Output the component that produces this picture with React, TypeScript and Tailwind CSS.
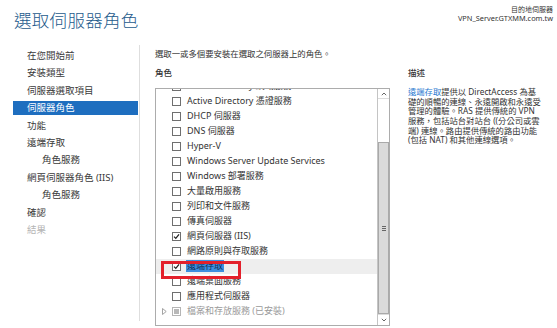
import React from "react";

const FONT = '"Noto Sans", "Noto Sans CJK TC", sans-serif';

type Row = {
  label: string;
  checked?: boolean;
  disabled?: boolean;
  expand?: boolean;
  selected?: boolean;
};

const rows: Row[] = [
  { label: "Active Directory 網域服務" },
  { label: "Active Directory 憑證服務" },
  { label: "DHCP 伺服器" },
  { label: "DNS 伺服器" },
  { label: "Hyper-V" },
  { label: "Windows Server Update Services" },
  { label: "Windows 部署服務" },
  { label: "大量啟用服務" },
  { label: "列印和文件服務" },
  { label: "傳真伺服器" },
  { label: "網頁伺服器 (IIS)", checked: true },
  { label: "網路原則與存取服務" },
  { label: "遠端存取", checked: true, selected: true },
  { label: "遠端桌面服務" },
  { label: "應用程式伺服器" },
  { label: "檔案和存放服務 (已安裝)", disabled: true, expand: true },
];

const nav = [
  { label: "在您開始前" },
  { label: "安裝類型" },
  { label: "伺服器選取項目" },
  { label: "伺服器角色", active: true },
  { label: "功能" },
  { label: "遠端存取" },
  { label: "角色服務", indent: true },
  { label: "網頁伺服器角色 (IIS)" },
  { label: "角色服務", indent: true },
  { label: "確認" },
  { label: "結果", dim: true },
];

function Checkbox({ checked, disabled }: { checked?: boolean; disabled?: boolean }) {
  return (
    <div
      className={
        "w-[9px] h-[9px] shrink-0 border flex items-center justify-center bg-white " +
        (disabled ? "border-[#b5b5b5]" : "border-[#6f6f6f]")
      }
    >
      {checked && (
        <svg width="7" height="7" viewBox="0 0 7 7">
          <path d="M1 3.6 L2.8 5.4 L6 1.4" fill="none" stroke="#222" strokeWidth="1.3" />
        </svg>
      )}
      {disabled && <div className="w-[5px] h-[5px] bg-[#b8b8b8]" />}
    </div>
  );
}

export default function App() {
  return (
    <div
      className="relative w-[557px] h-[328px] bg-white overflow-hidden text-[#333]"
      style={{ fontFamily: FONT }}
    >
      {/* header */}
      <div className="flex justify-between h-[45px]">
        <div className="pl-[14px] pt-[8px] text-[17.5px] leading-[24px] text-[#1d5a8c] font-light tracking-[0.3px]">
          選取伺服器角色
        </div>
        <div className="pr-[4px] pt-[6px] text-right text-[7px] text-[#333]">
          <div className="h-[8px] leading-[8px]">目的地伺服器</div>
          <div className="h-[9px] leading-[9px] text-[7.4px]">VPN_Server.GTXMM.com.tw</div>
        </div>
      </div>

      <div className="flex">
        {/* left nav */}
        <div className="w-[140px] h-[276px] border-r border-[#dedede] pt-[4px] flex flex-col gap-[3.4px]">
          {nav.map((n, i) => (
            <div
              key={i}
              className={
                "ml-[13px] w-[125px] h-[14px] leading-[14px] text-[9.5px] " +
                (n.indent ? "pl-[29px] " : "pl-[14px] ") +
                (n.active ? "bg-[#1e6ebf] text-white " : n.dim ? "text-[#b5b5b5] " : "text-[#3a3a3a] ")
              }
            >
              {n.label}
            </div>
          ))}
        </div>

        {/* right content */}
        <div className="pl-[15px] pt-[2px] flex-1">
          <div className="text-[8.4px] leading-[14px] text-[#333]">
            選取一或多個要安裝在選取之伺服器上的角色。
          </div>
          <div className="flex mt-[5px]">
            <div className="w-[235px]">
              <div className="text-[8.5px] leading-[14px] font-medium text-[#333]">角色</div>
              <div className="mt-[8px] h-[238px] border border-[#acacac] flex bg-white">
                <div className="flex-1 overflow-hidden">
                  <div className="-mt-[10.5px]">
                    {rows.map((r, i) => (
                      <div
                        key={i}
                        className={
                          "h-[15px] flex items-center text-[9px] " +
                          (r.selected ? "bg-[#eeeeee] " : "")
                        }
                      >
                        <div className="w-[16px] shrink-0 flex justify-center">
                          {r.expand && (
                            <svg width="5" height="7" viewBox="0 0 5 7">
                              <path d="M0.5 0.5 L4.2 3.5 L0.5 6.5 Z" fill="none" stroke="#9a9a9a" strokeWidth="0.9" />
                            </svg>
                          )}
                        </div>
                        <Checkbox checked={r.checked} disabled={r.disabled} />
                        <div
                          className={
                            "ml-[5px] whitespace-nowrap leading-[12px] " +
                            (r.selected
                              ? "bg-[#3d8fe0] text-[#0f2f5c] px-[1px] "
                              : r.disabled
                              ? "text-[#9a9a9a] px-[1px] "
                              : "text-[#333] px-[1px] ")
                          }
                        >
                          {r.label}
                        </div>
                      </div>
                    ))}
                  </div>
                </div>
                {/* scrollbar */}
                <div className="w-[12px] border-l border-[#c4c4c4] flex flex-col bg-white">
                  <div className="h-[10px] border-b border-[#dcdcdc] flex items-center justify-center">
                    <svg width="6" height="4" viewBox="0 0 6 4">
                      <path d="M0.8 3.2 L3 1 L5.2 3.2" fill="none" stroke="#555" strokeWidth="0.9" />
                    </svg>
                  </div>
                  <div className="h-[43px]" />
                  <div className="flex-1 bg-[#dadada] border border-[#a9a9a9] flex items-center justify-center">
                    <div className="flex flex-col gap-[1px]">
                      <div className="w-[4px] h-[1px] bg-[#666]" />
                      <div className="w-[4px] h-[1px] bg-[#666]" />
                      <div className="w-[4px] h-[1px] bg-[#666]" />
                    </div>
                  </div>
                  <div className="h-[11px] border-t border-[#dcdcdc] flex items-center justify-center">
                    <svg width="6" height="4" viewBox="0 0 6 4">
                      <path d="M0.8 0.8 L3 3 L5.2 0.8" fill="none" stroke="#555" strokeWidth="0.9" />
                    </svg>
                  </div>
                </div>
              </div>
            </div>

            {/* description */}
            <div className="ml-[18px] w-[145px]">
              <div className="text-[8.5px] leading-[14px] font-medium text-[#333]">描述</div>
              <div className="mt-[7px] text-[8.3px] text-[#333] whitespace-nowrap">
                <div className="h-[9.7px] leading-[9.7px]">
                  <span className="text-[#2a7ad0]">遠端存取</span>提供以 DirectAccess 為基
                </div>
                <div className="h-[9.7px] leading-[9.7px]">礎的順暢的連線、永遠開啟和永遠受</div>
                <div className="h-[9.7px] leading-[9.7px]">管理的體驗。RAS 提供傳統的 VPN</div>
                <div className="h-[9.7px] leading-[9.7px]">服務，包括站台對站台 ((分公司或雲</div>
                <div className="h-[9.7px] leading-[9.7px]">端) 連線。路由提供傳統的路由功能</div>
                <div className="h-[9.7px] leading-[9.7px]">(包括 NAT) 和其他連線選項。</div>
              </div>
            </div>
          </div>
        </div>
      </div>

      {/* red highlight box */}
      <div className="absolute left-[161px] top-[261px] w-[80px] h-[18px] border-[3px] border-[#e3202b]" />
    </div>
  );
}
